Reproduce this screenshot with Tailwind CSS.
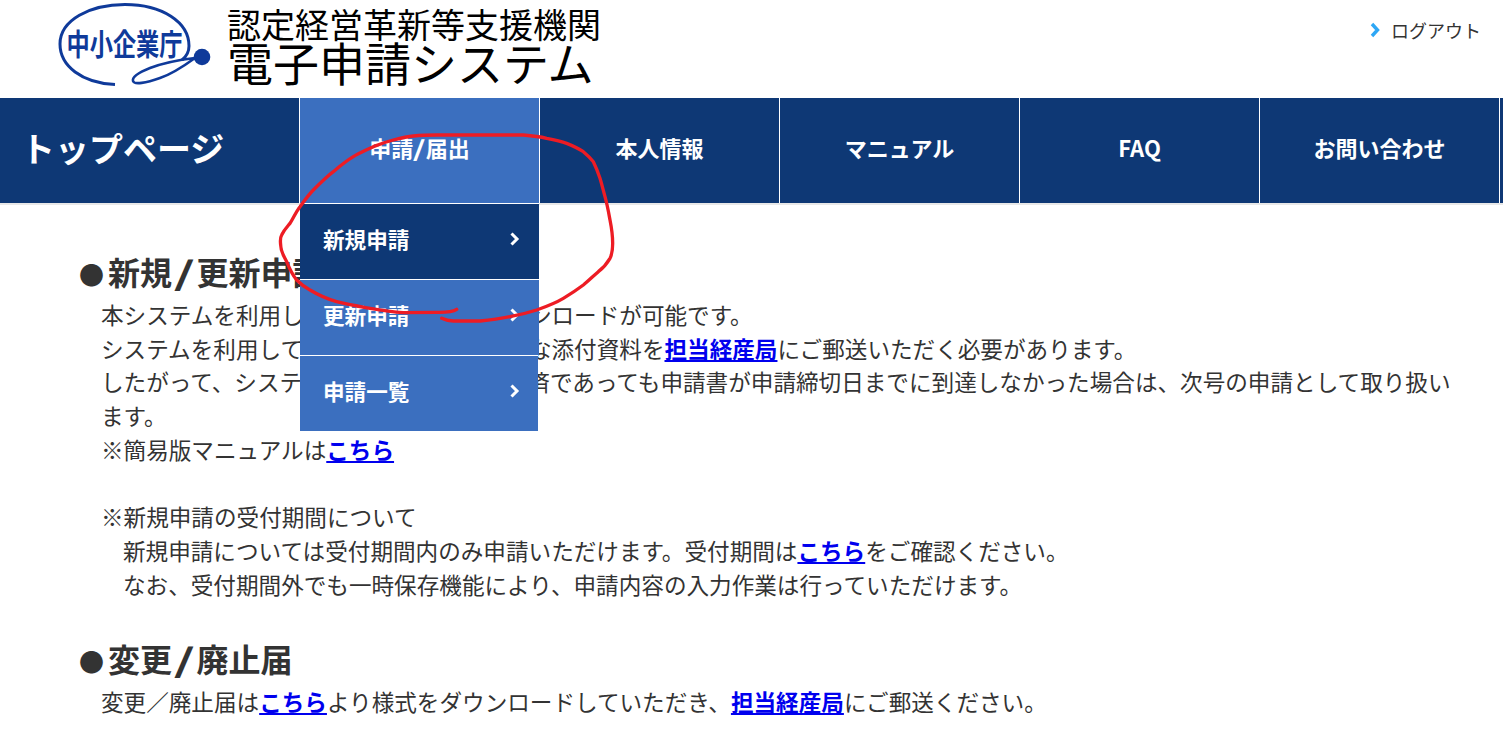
<!DOCTYPE html>
<html lang="ja">
<head>
    <meta charset="UTF-8">
    <title>電子申請システム</title>
    <script src="https://cdn.jsdelivr.net/npm/@tailwindcss/browser@4"></script>
</head>
<body class="bg-white h-[753px] overflow-hidden relative text-[#333] font-['Noto_Sans_CJK_JP','Noto_Sans',sans-serif]">
    <!-- ヘッダー -->
    <header class="h-[98px] flex items-start">
        <svg class="w-[227px] h-[98px] shrink-0" viewBox="0 0 227 98" fill="none">
            <path d="M115 84.5 C82 83 60 66 60 44 C60 20 90 4.5 125 4.5 C162 4.5 189 22 189 46 C189 52 187 56 182 60" stroke="#0f3a9a" stroke-width="3" />
            <path d="M195 58 C178 60 163 63 150 68 C140 72 132 77 133 81 C134 85 146 83 160 78 C172 74 184 66 195 58 Z" stroke="#0f3a9a" stroke-width="2.6" />
            <circle cx="202" cy="57" r="8.3" fill="#0f3a9a" />
            <text x="124.5" y="55" text-anchor="middle" font-size="30" font-weight="700" fill="#0f3a9a" textLength="116" lengthAdjust="spacingAndGlyphs" font-family="'Noto Sans CJK JP',sans-serif">中小企業庁</text>
        </svg>
        <div class="pt-[6px] text-black">
            <div class="text-[34px] leading-[36px] whitespace-nowrap">認定経営革新等支援機関</div>
            <div class="text-[46px] leading-[38px] whitespace-nowrap">電子申請システム</div>
        </div>
        <a class="ml-auto mr-[22px] mt-[17px] flex items-center gap-[11px] text-[18px] leading-[26px]">
            <svg class="w-[10px] h-[16px]" viewBox="0 0 10 16" fill="none"><path d="M2 2 L7.5 8 L2 14" stroke="#2ea7f5" stroke-width="3.4" /></svg>
            ログアウト
        </a>
    </header>

    <!-- グローバルナビ -->
    <nav class="h-[107px] flex bg-[#0e3875] border-b-2 border-[#e8e8e8] text-white font-bold text-[22px]">
        <div class="w-[300px] border-r border-white flex items-center pl-[21px] pb-[7px] text-[34px]">トップページ</div>
        <div class="w-[240px] border-r border-white bg-[#3b6fbf] flex items-center justify-center pb-[7px] relative">
            <span>申請<span class="inline-block mx-[2px] scale-x-[1.5]">/</span>届出</span>
            <div class="absolute left-0 top-[105px] w-[239px] z-10 text-[21.6px]">
                <div class="h-[76px] bg-[#0e3875] border-t border-white flex items-center justify-between pl-[23px] pr-[19px] pb-[5px]">
                    新規申請
                    <svg class="w-[11px] h-[14px]" viewBox="0 0 11 14" fill="none"><path d="M2.5 1.5 L8 7 L2.5 12.5" stroke="#fff" stroke-width="3" /></svg>
                </div>
                <div class="h-[76px] bg-[#3b6fbf] border-t border-white flex items-center justify-between pl-[23px] pr-[19px] pb-[5px]">
                    更新申請
                    <svg class="w-[11px] h-[14px]" viewBox="0 0 11 14" fill="none"><path d="M2.5 1.5 L8 7 L2.5 12.5" stroke="#fff" stroke-width="3" /></svg>
                </div>
                <div class="h-[76px] w-[238px] bg-[#3b6fbf] border-t border-white flex items-center justify-between pl-[23px] pr-[18px] pb-[5px]">
                    申請一覧
                    <svg class="w-[11px] h-[14px]" viewBox="0 0 11 14" fill="none"><path d="M2.5 1.5 L8 7 L2.5 12.5" stroke="#fff" stroke-width="3" /></svg>
                </div>
            </div>
        </div>
        <div class="w-[240px] border-r border-white flex items-center justify-center pb-[7px]">本人情報</div>
        <div class="w-[240px] border-r border-white flex items-center justify-center pb-[7px]">マニュアル</div>
        <div class="w-[240px] border-r border-white flex items-center justify-center pb-[7px]">FAQ</div>
        <div class="w-[240px] border-r border-white flex items-center justify-center pb-[7px]">お問い合わせ</div>
    </nav>

    <!-- 本文 -->
    <main class="pl-[79px] pt-[43px]">
        <h2 class="text-[32px] leading-[46px] font-bold"><span class="text-[25px] mr-[4px]">●</span>新規<span class="inline-block mx-[6px] scale-x-[1.7]">/</span>更新申請</h2>
        <p class="pl-[22px] text-[22.6px] leading-[33.7px] whitespace-nowrap mt-[1px]">
            本システムを利用して申請書の作成・ダウンロードが可能です。<br>
            システムを利用して作成した申請書と必要な添付資料を<a class="text-[#0000ee] font-bold underline">担当経産局</a>にご郵送いただく必要があります。<br>
            したがって、システム上での申請手続完了済であっても申請書が申請締切日までに到達しなかった場合は、次号の申請として取り扱い<br>
            ます。<br>
            ※簡易版マニュアルは<a class="text-[#0000ee] font-bold underline">こちら</a><br>
            <br>
            ※新規申請の受付期間について<br>
            <span class="pl-[22px]">新規申請については受付期間内のみ申請いただけます。受付期間は<a class="text-[#0000ee] font-bold underline">こちら</a>をご確認ください。</span><br>
            <span class="pl-[22px]">なお、受付期間外でも一時保存機能により、申請内容の入力作業は行っていただけます。</span>
        </p>
        <h2 class="text-[32px] leading-[46px] font-bold mt-[34px]"><span class="text-[25px] mr-[4px]">●</span>変更<span class="inline-block mx-[6px] scale-x-[1.7]">/</span>廃止届</h2>
        <p class="pl-[22px] text-[22.6px] leading-[33.7px] whitespace-nowrap mt-[1px]">
            変更／廃止届は<a class="text-[#0000ee] font-bold underline">こちら</a>より様式をダウンロードしていただき、<a class="text-[#0000ee] font-bold underline">担当経産局</a>にご郵送ください。
        </p>
    </main>

    <!-- 赤ペンの書き込み -->
    <svg class="absolute left-[270px] top-[120px] w-[360px] h-[320px] z-20 pointer-events-none" viewBox="0 0 1080 960" fill="none">
        <path d="M560 568 C545 578 525 577 500 577 L400 578 C360 575 330 570 300 565 C260 558 230 553 200 545 C165 535 145 525 120 510 C100 500 90 490 80 480 C65 462 58 445 50 425 C40 405 32 395 32 375 C30 358 32 350 35 345 C42 330 50 322 60 310 C70 295 78 275 90 260 C105 240 115 225 130 210 C150 190 170 170 190 155 C210 138 230 122 250 110 C270 98 290 90 310 80 C330 72 350 65 370 60 C390 55 410 50 430 48 C450 46 475 45 500 45 L760 45 C785 47 810 50 830 55 C850 59 870 63 890 70 C910 78 925 85 940 95 C952 105 962 115 970 125 C980 145 985 160 990 175 C996 195 1000 212 1005 230 C1012 255 1016 278 1020 300 C1025 325 1028 350 1028 370 C1028 390 1026 403 1020 415 C1010 432 998 445 985 455 C970 468 955 483 940 495 C920 510 900 523 880 535 C855 550 828 560 800 570 C775 578 748 585 720 590 C690 596 660 600 630 603 L550 603 C535 603 525 600 515 595" stroke="#ed1c24" stroke-width="10" stroke-linecap="round" stroke-linejoin="round" />
    </svg>
</body>
</html>
